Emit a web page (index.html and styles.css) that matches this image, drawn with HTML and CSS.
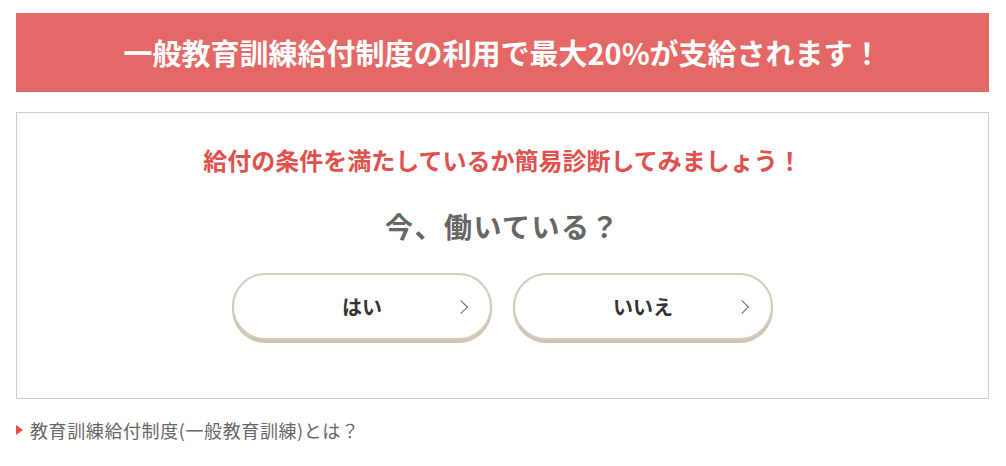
FILE: index.html
```
<!DOCTYPE html>
<html lang="ja">
<head>
    <meta charset="UTF-8">
    <meta name="viewport" content="width=device-width, initial-scale=1.0">
    <title>簡易診断</title>
    <link rel="stylesheet" href="styles.css">
</head>
<body>
    <div id="wrap">
        <h2 class="banner">一般教育訓練給付制度の利用で最大20%が支給されます！</h2>
        <div class="check-box">
            <p class="lead">給付の条件を満たしているか簡易診断してみましょう！</p>
            <p class="question">今、働いている？</p>
            <ul class="answers">
                <li><a href="#">はい</a></li>
                <li><a href="#">いいえ</a></li>
            </ul>
        </div>
        <a class="more" href="#">教育訓練給付制度(一般教育訓練)とは？</a>
    </div>
</body>
</html>
```

FILE: styles.css
```
*{
    margin: 0;
    padding: 0;
    box-sizing: border-box;
}
body{
    font-family: "Noto Sans CJK JP", "Noto Sans", sans-serif;
    background: #fff;
    color: #333;
}
ul{
    list-style: none;
}
a{
    text-decoration: none;
}
#wrap{
    padding: 13px 17px 0 16px;
}
.banner{
    height: 79px;
    line-height: 79px;
    background: #e46966;
    color: #fff;
    font-size: 29px;
    font-weight: bold;
    text-align: center;
}
.check-box{
    margin-top: 20px;
    border: 1px solid #d4cbbd;
    padding: 31px 0 58px;
    text-align: center;
}
.lead{
    color: #e0504d;
    font-size: 24px;
    font-weight: bold;
    line-height: 32px;
}
.question{
    margin-top: 30px;
    color: #666;
    font-size: 28px;
    font-weight: bold;
    line-height: 40px;
    letter-spacing: 1.5px;
}
.answers{
    margin-top: 27px;
    display: flex;
    justify-content: center;
    gap: 21px;
}
.answers li a{
    position: relative;
    display: block;
    width: 260px;
    height: 67px;
    line-height: 63px;
    border: 2px solid #d4cbbd;
    border-radius: 34px;
    box-shadow: 0 3px 0 #cfc5b4;
    background: #fff;
    color: #333;
    font-size: 20px;
    font-weight: bold;
}
.answers li a::after{
    content: "";
    position: absolute;
    right: 24px;
    top: 50%;
    width: 9px;
    height: 9px;
    margin-top: -5px;
    border-top: 1px solid #666;
    border-right: 1px solid #666;
    transform: rotate(45deg);
}
.more{
    display: inline-block;
    margin-top: 19px;
    padding-left: 14px;
    position: relative;
    color: #666;
    font-size: 18px;
    line-height: 24px;
    letter-spacing: 0.6px;
}
.more::before{
    content: "";
    position: absolute;
    left: 0;
    top: 7px;
    border-left: 7px solid #e0504d;
    border-top: 5px solid transparent;
    border-bottom: 5px solid transparent;
}
```
